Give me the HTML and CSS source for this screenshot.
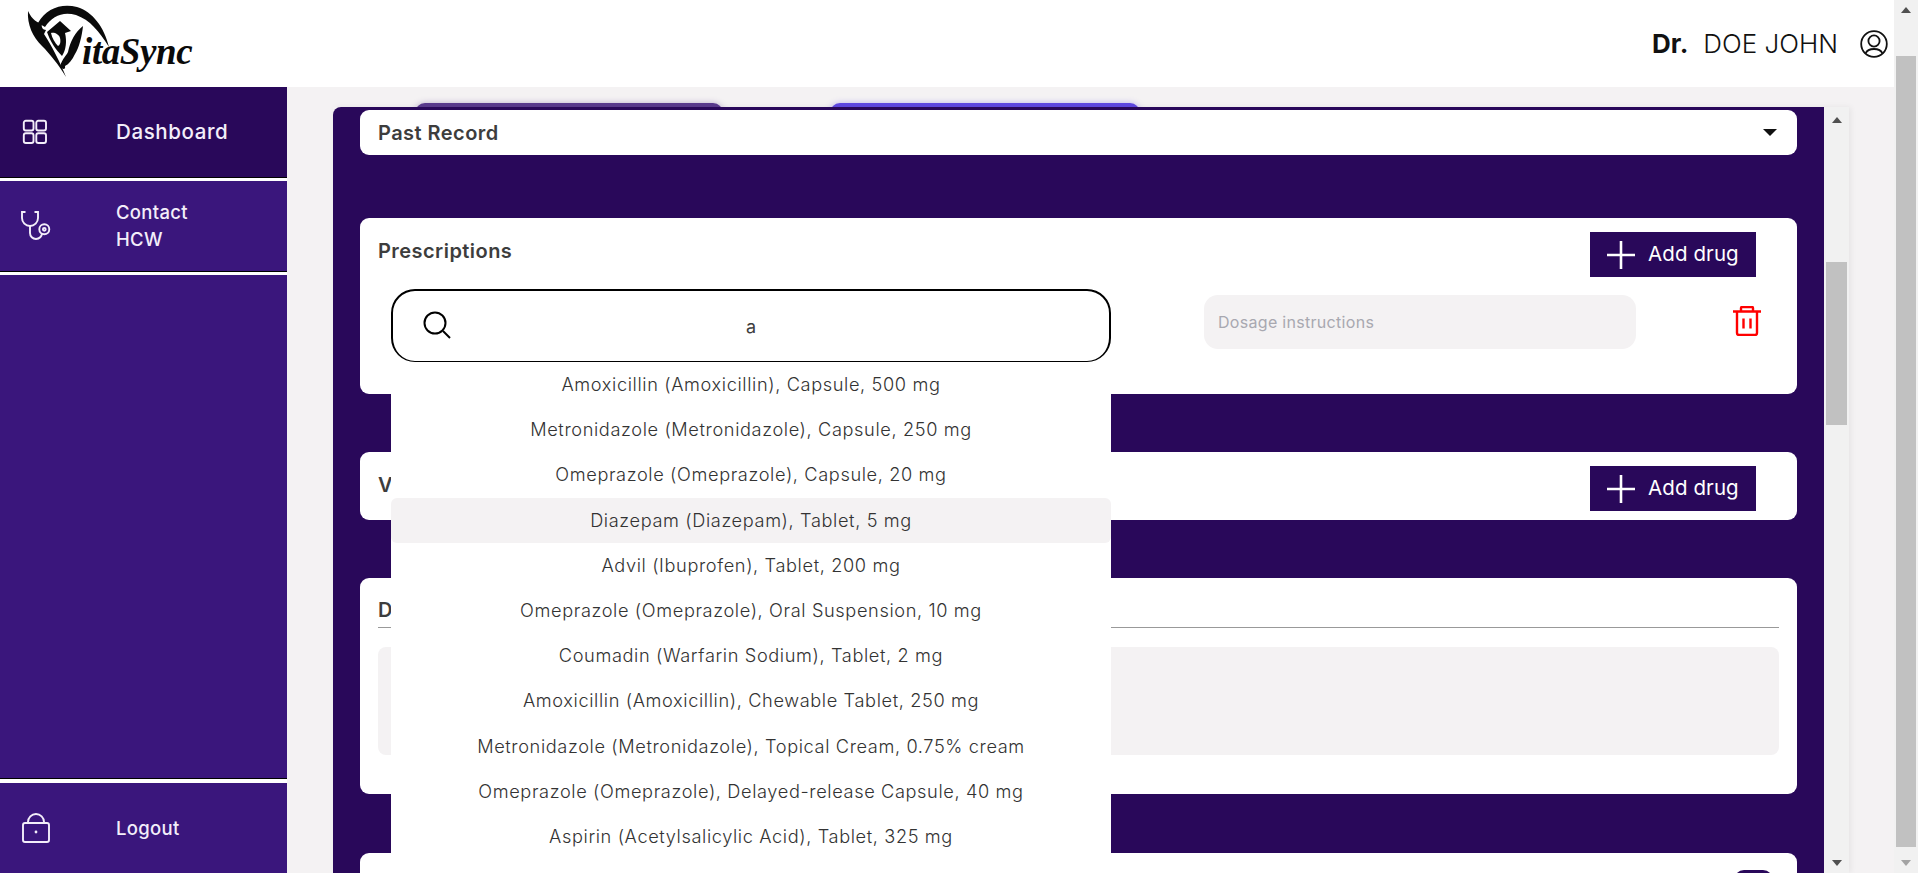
FILE: index.html
```html
<!DOCTYPE html>
<html lang="en">
<head>
    <meta charset="UTF-8">
    <meta name="viewport" content="width=device-width, initial-scale=1.0">
    <title>VitaSync</title>
    <link rel="stylesheet" href="styles.css">
</head>
<body>

<div class="page">
    <div class="page-body">
        <header class="topbar">
            <svg class="logo" viewBox="0 0 200 87" width="200" height="87">
                <path d="M38 23C46 8 62 3 77 7C93 12 104 27 109 47C99 31 90 20 76 15C63 11 52 16 45 27Z"/>
                <path d="M28 11C32 20 38 23 42 24C41 27 43 30 46 30L44 34C52 46 60 62 66 77C58 64 50 54 42 46C33 37 27 25 28 11Z"/>
                <path d="M47 32L60 21L71 31L65 33C67 41 66 50 62 56C56 50 50 41 47 32Z"/>
                <path class="logo-cut" d="M51 33C54 32 59 34 60 38C61 42 60 45 58 46C55 43 52 38 51 33Z"/>
                <path d="M60 66C63 58 66 56 68 52C70 42 75 32 83 26C82 36 79 48 75 54C72 60 69 64 65 66C66 70 62 70 60 66Z"/>
                <text class="logo-text" x="82" y="64">itaSync</text>
            </svg>
            <div class="user">
                <span class="user-title">Dr.</span>
                <span class="user-name">DOE JOHN</span>
                <svg class="user-icon" viewBox="0 0 28 28" width="28" height="28">
                    <circle cx="14" cy="14" r="12.8"/>
                    <circle cx="14" cy="11" r="5.6"/>
                    <path d="M5.5 23.5C7 20 10 19 14 19S21 20 22.5 23.5"/>
                </svg>
            </div>
        </header>

        <div class="layout">
            <nav class="sidebar">
                <a class="nav-item nav-active">
                    <svg class="nav-icon" viewBox="0 0 30 26" width="30" height="26">
                        <rect x="2.8" y="1.8" width="9.7" height="9.7" rx="2"/>
                        <rect x="15.3" y="1.8" width="9.7" height="9.7" rx="2"/>
                        <rect x="2.8" y="14.3" width="9.7" height="9.7" rx="2"/>
                        <rect x="15.3" y="14.3" width="9.7" height="9.7" rx="2"/>
                    </svg>
                    <span>Dashboard</span>
                </a>
                <a class="nav-item nav-small">
                    <svg class="nav-icon" viewBox="0 0 30 30" width="30" height="30">
                        <path d="M4.5 1H1V7a8 8 0 0 0 16 0V1H13.5"/>
                        <path d="M9 15V22a6 6 0 0 0 12 0V23.5"/>
                        <circle cx="23.3" cy="18.3" r="5"/>
                        <circle cx="23.3" cy="18.3" r="1.4"/>
                    </svg>
                    <span>Contact<br>HCW</span>
                </a>
                <div class="nav-fill"></div>
                <a class="nav-item nav-small nav-last">
                    <svg class="nav-icon" viewBox="0 0 30 30" width="30" height="30">
                        <rect x="2" y="10" width="26" height="19" rx="2"/>
                        <path d="M7 10V9a8 8 0 0 1 16 0V10"/>
                        <circle class="nav-dot" cx="15" cy="19" r="1.4"/>
                    </svg>
                    <span>Logout</span>
                </a>
            </nav>

            <main class="content">
                <div class="tabs">
                    <div class="tab tab-dark"></div>
                    <div class="tab tab-blue"></div>
                </div>
                <div class="panel-wrap">
                    <div class="panel">
                        <section class="card card-past">
                            <h3>Past Record</h3>
                            <span class="caret"></span>
                        </section>

                        <section class="card card-rx">
                            <div class="card-head">
                                <h3>Prescriptions</h3>
                                <button class="add-btn">
                                    <svg viewBox="0 0 28 28" width="28" height="28"><path d="M14 0V28M0 14H28"/></svg>
                                    Add drug
                                </button>
                            </div>
                            <div class="rx-row">
                                <div class="search">
                                    <svg class="search-icon" viewBox="0 0 28 28" width="28" height="28">
                                        <circle cx="12" cy="12" r="10.5"/>
                                        <path d="M20 20L27 27"/>
                                    </svg>
                                    <input class="search-input" type="text" value="a">
                                    <ul class="drug-list">
                                        <li>Amoxicillin (Amoxicillin), Capsule, 500 mg</li>
                                        <li>Metronidazole (Metronidazole), Capsule, 250 mg</li>
                                        <li>Omeprazole (Omeprazole), Capsule, 20 mg</li>
                                        <li class="drug-hover">Diazepam (Diazepam), Tablet, 5 mg</li>
                                        <li>Advil (Ibuprofen), Tablet, 200 mg</li>
                                        <li>Omeprazole (Omeprazole), Oral Suspension, 10 mg</li>
                                        <li>Coumadin (Warfarin Sodium), Tablet, 2 mg</li>
                                        <li>Amoxicillin (Amoxicillin), Chewable Tablet, 250 mg</li>
                                        <li>Metronidazole (Metronidazole), Topical Cream, 0.75% cream</li>
                                        <li>Omeprazole (Omeprazole), Delayed-release Capsule, 40 mg</li>
                                        <li>Aspirin (Acetylsalicylic Acid), Tablet, 325 mg</li>
                                        <li>Bactrim (Sulfamethoxazole/Trimethoprim), Tablet, 400 mg/80 mg</li>
                                    </ul>
                                </div>
                                <input class="dosage" type="text" placeholder="Dosage instructions">
                                <svg class="trash" viewBox="0 0 28 30" width="28" height="30">
                                    <path d="M0 5.5H28M8 5V2a1 1 0 0 1 1-1H19a1 1 0 0 1 1 1V5M4 5.5V27a2 2 0 0 0 2 2H22a2 2 0 0 0 2-2V5.5M10.5 12.5V22.5M17.5 12.5V22.5"/>
                                </svg>
                            </div>
                        </section>

                        <section class="card card-vax">
                            <div class="card-head">
                                <h3>Vaccinations</h3>
                                <button class="add-btn">
                                    <svg viewBox="0 0 28 28" width="28" height="28"><path d="M14 0V28M0 14H28"/></svg>
                                    Add drug
                                </button>
                            </div>
                        </section>

                        <section class="card card-notes">
                            <h3 class="notes-title">Doctor's Notes</h3>
                            <div class="notes-box"></div>
                        </section>

                        <section class="card card-next">
                            <span class="pill"></span>
                        </section>
                    </div>
                    <div class="scrollbar">
                        <span class="arrow-up"></span>
                        <div class="track"><div class="thumb thumb-inner"></div></div>
                        <span class="arrow-down"></span>
                    </div>
                </div>
            </main>
        </div>
    </div>

    <div class="scrollbar scrollbar-page">
        <span class="arrow-up"></span>
        <div class="track"><div class="thumb thumb-page"></div></div>
        <span class="arrow-down arrow-off"></span>
    </div>
</div>

</body>
</html>
```

FILE: styles.css
```css
* { box-sizing: border-box; }
html, body { margin: 0; height: 100%; overflow: hidden; }
body { font-family: Inter, "Noto Sans", sans-serif; color: #3d3d3d; background-color: #f4f2f3; }
h3 { margin: 0; font-size: 20px; font-weight: 600; letter-spacing: 0.45px; color: #3d3d3d; }
button, input { font-family: inherit; }

.page { display: flex; height: 873px; }
.page-body { flex: 1; display: flex; flex-direction: column; min-width: 0; }

/* top bar */
.topbar { height: 87px; flex: none; background-color: #fff; display: flex; justify-content: space-between; align-items: center; padding-right: 6px; }
.logo { fill: #0a0a0a; }
.logo-cut { fill: #fff; }
.logo-text { font-family: "Liberation Serif", serif; font-style: italic; font-weight: 700; font-size: 37px; letter-spacing: -0.4px; }
.user { display: flex; align-items: center; color: #111; font-size: 26px; }
.user-title { font-weight: 700; margin-right: 15px; }
.user-name { font-weight: 300; margin-right: 22px; }
.user-icon { fill: none; stroke: #111; stroke-width: 1.8; }

/* sidebar */
.layout { flex: 1; display: flex; min-height: 0; }
.sidebar { width: 287px; flex: none; display: flex; flex-direction: column; background-color: #fff; }
.nav-item { height: 91px; flex: none; display: flex; align-items: center; background-color: #3a167c; color: #f3eefa; font-size: 20.5px; font-weight: 500; letter-spacing: 0.6px; border-bottom: 1px solid #000; margin-bottom: 3px; }
.nav-active { background-color: #29085a; }
.nav-small { font-size: 18.5px; letter-spacing: 0.3px; line-height: 27px; }
.nav-last { height: 90px; margin-bottom: 0; border-bottom: 0; }
.nav-fill { flex: 1; background-color: #3a167c; border-bottom: 1px solid #000; margin-bottom: 4px; }
.nav-icon { margin-left: 21px; flex: none; fill: none; stroke: #f3eefa; stroke-width: 1.9; }
.nav-item span { margin-left: 65px; }
.nav-active span { padding-bottom: 2px; }
.nav-dot { fill: #f3eefa; stroke: none; }

/* main */
.content { flex: 1; min-width: 0; display: flex; flex-direction: column; padding: 16px 45px 0 46px; }
.tabs { height: 4px; flex: none; display: flex; }
.tab { height: 12px; border-radius: 10px 10px 0 0; }
.tab-dark { width: 308px; margin-left: 82px; background-color: #5a3a8e; box-shadow: 0 0 6px rgba(90, 58, 142, 0.35); }
.tab-blue { width: 310px; margin-left: 107px; background-color: #5f48e2; box-shadow: 0 0 6px rgba(95, 72, 226, 0.35); }

.panel-wrap { flex: 1; min-height: 0; display: flex; position: relative; box-shadow: 2px 0 6px rgba(0, 0, 0, 0.06); }
.panel { flex: 1; min-width: 0; overflow: hidden; background-color: #29085a; border-radius: 8px 0 0 0; padding: 3px 27px 0; }

.card { background-color: #fff; border-radius: 9px; margin-bottom: 58px; }
.card h3 { padding-left: 18px; }
.card-past { height: 45px; margin-bottom: 63px; display: flex; justify-content: space-between; align-items: center; padding-right: 20px; }
.caret { width: 0; height: 0; border-left: 7px solid transparent; border-right: 7px solid transparent; border-top: 7px solid #111; }

.card-head { display: flex; justify-content: space-between; align-items: center; padding-right: 41px; }
.card-head h3 { padding-bottom: 7px; }
.add-btn { width: 166px; height: 45px; display: flex; align-items: center; gap: 13px; padding: 0 0 2px 17px; border: 0; background-color: #29085a; color: #fff; font-size: 20.5px; font-weight: 400; letter-spacing: 0.1px; cursor: pointer; }
.add-btn svg { fill: none; stroke: #fff; stroke-width: 2.6; flex: none; margin-top: 2px; }

.card-rx { height: 176px; padding-top: 14px; position: relative; z-index: 2; }
.rx-row { display: flex; align-items: flex-start; margin: 12px 0 0 31px; }
.search { width: 720px; height: 73px; flex: none; position: relative; }
.search-input { width: 100%; height: 100%; display: block; text-align: center; font-size: 18px; color: #3d3d3d; background-color: #fff; border: 2px solid #000; border-bottom-width: 1px; border-radius: 24px; outline: none; }
.search-icon { position: absolute; left: 32px; top: 22px; fill: none; stroke: #000; stroke-width: 2; }
.drug-list { list-style: none; margin: 0; padding: 0; position: absolute; left: 0; top: 73px; width: 100%; background-color: #fff; z-index: 3; }
.drug-list li { height: 45.2px; line-height: 45.2px; text-align: center; font-size: 18.2px; font-weight: 300; letter-spacing: 0.62px; white-space: nowrap; color: #333; }
.drug-hover { background-color: #f4f2f3; border-radius: 6px; }

.dosage { width: 432px; height: 54px; flex: none; margin: 6px 0 0 93px; padding: 0 14px; background-color: #f4f2f3; border: 0; border-radius: 14px; font-size: 16px; letter-spacing: 0.3px; outline: none; }
.dosage::placeholder { color: #a8a8b0; opacity: 1; }
.trash { margin: 17px 0 0 97px; flex: none; fill: none; stroke: #f00; stroke-width: 2.4; }

.card-vax { height: 68px; padding-top: 14px; }

.card-notes { height: 216px; padding: 20px 18px 0; margin-bottom: 59px; }
.card-notes h3.notes-title { padding: 0 0 4px; height: 30px; border-bottom: 1px solid #999; }
.notes-box { height: 108px; margin-top: 19px; background-color: #f4f2f3; border-radius: 8px; }

.card-next { height: 80px; display: flex; justify-content: flex-end; padding: 17px 24px 0 0; margin-bottom: 0; }
.pill { width: 39px; height: 20px; background-color: #29085a; border-radius: 10px; }

/* scrollbars */
.scrollbar { width: 25px; flex: none; display: flex; flex-direction: column; align-items: center; background-color: #f1f1f1; padding: 10px 0 7px; }
.scrollbar-page { width: 24px; height: 873px; padding-top: 7px; }
.track { flex: 1; width: 100%; padding: 0 2px; }
.thumb { background-color: #c1c1c1; }
.thumb-inner { height: 163px; margin-top: 139px; }
.thumb-page { height: 791px; margin-top: 43px; }
.arrow-up { width: 0; height: 0; flex: none; border-left: 5.5px solid transparent; border-right: 5.5px solid transparent; border-bottom: 6px solid #505050; }
.arrow-down { width: 0; height: 0; flex: none; border-left: 5.5px solid transparent; border-right: 5.5px solid transparent; border-top: 6px solid #505050; }
.arrow-off { border-top-color: #a3a3a3; }
```
